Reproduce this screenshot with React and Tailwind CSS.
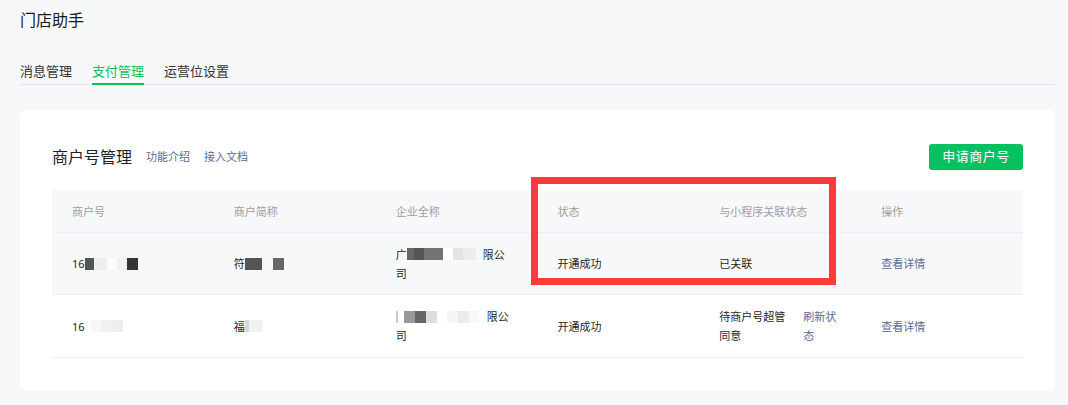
import React from "react";

const font = { fontFamily: '"Noto Sans", "Noto Sans CJK SC", sans-serif' };

// pixelated mosaic used to hide private info
function Mosaic({ blocks }) {
  return (
    <span className="inline-flex items-center h-[12px]">
      {blocks.map(([w, c], i) => (
        <span key={i} className="inline-block h-[12px]" style={{ width: w, background: c }} />
      ))}
    </span>
  );
}

const columns = ["商户号", "商户简称", "企业全称", "状态", "与小程序关联状态", "操作"];

function Cell({ children }) {
  return <div className="pl-[20px] flex items-center">{children}</div>;
}

function Link({ children, className = "" }) {
  return <span className={"text-[#576b95] cursor-pointer " + className}>{children}</span>;
}

export default function App() {
  return (
    <div className="min-h-screen bg-[#f7f8fa] text-[#1f1f1f]" style={font}>
      <div className="ml-[20px] w-[1035px] pt-[8px] pb-[14px]">
        <h1 className="text-[16px] leading-[24px] font-normal text-[#1a1a1a]">门店助手</h1>

        {/* --- TABS --- */}
        <div className="mt-[29px] flex gap-[20px] border-b border-[#e3e5e8] text-[13px] leading-[20px]">
          <div className="-mb-px pb-[2px] border-b-2 border-transparent text-[#333]">消息管理</div>
          <div className="-mb-px pb-[2px] border-b-2 border-[#07c160] text-[#07c160]">支付管理</div>
          <div className="-mb-px pb-[2px] border-b-2 border-transparent text-[#333]">运营位设置</div>
        </div>

        {/* --- CARD --- */}
        <div className="mt-[25px] bg-white rounded-[6px] px-[32px] pt-[34px] pb-[33px]">
          <div className="flex items-center justify-between h-[26px]">
            <div className="flex items-center">
              <span className="text-[16px] leading-[24px]">商户号管理</span>
              <Link className="ml-[14px] text-[11px]">功能介绍</Link>
              <Link className="ml-[14px] text-[11px]">接入文档</Link>
            </div>
            <button className="w-[94px] h-[26px] rounded-[3px] bg-[#07c160] text-white text-[13px] tracking-[0.5px]">
              申请商户号
            </button>
          </div>

          <div className="relative mt-[20px] text-[11px] leading-[19px]">
            {/* header */}
            <div className="grid grid-cols-6 h-[43px] bg-[#f7f8fa] border-b border-[#eceef1] text-[#9e9e9e]">
              {columns.map((c) => (
                <Cell key={c}>{c}</Cell>
              ))}
            </div>

            {/* row 1 */}
            <div className="grid grid-cols-6 h-[62px] bg-[#f7f8fa] border-b border-[#eceef1]">
              <Cell>
                <span>16</span>
                <Mosaic blocks={[[9, "#555"], [13, "#eeeff1"], [10, "#fbfbfc"], [10, "#f0f1f3"], [11, "#353535"]]} />
              </Cell>
              <Cell>
                <span>符</span>
                <Mosaic blocks={[[17, "#555"], [11, "#f5f6f8"], [11, "#666"]]} />
              </Cell>
              <Cell>
                <div>
                  <div className="flex items-center">
                    <span>广</span>
                    <Mosaic blocks={[[7, "#666"], [10, "#555"], [19, "#737373"], [10, "#ffffff"], [10, "#e4e4e6"], [13, "#ececee"], [7, "#f7f8fa"]]} />
                    <span>限公</span>
                  </div>
                  <div>司</div>
                </div>
              </Cell>
              <Cell>开通成功</Cell>
              <Cell>已关联</Cell>
              <Cell>
                <Link>查看详情</Link>
              </Cell>
            </div>

            {/* row 2 */}
            <div className="grid grid-cols-6 h-[63px] border-b border-[#f0f1f3]">
              <Cell>
                <span>16</span>
                <Mosaic blocks={[[6, "#fff"], [10, "#f7f7f8"], [12, "#f1f1f2"], [10, "#eeeeef"]]} />
              </Cell>
              <Cell>
                <span>福</span>
                <Mosaic blocks={[[4, "#d8d8d8"], [14, "#f2f2f3"]]} />
              </Cell>
              <Cell>
                <div>
                  <div className="flex items-center">
                    <Mosaic blocks={[[2, "#ccc"], [6, "#fff"], [11, "#999"], [11, "#666"], [11, "#ddd"], [10, "#fff"], [11, "#f5f5f6"], [11, "#ebebec"], [10, "#f8f8f8"], [8, "#fff"]]} />
                    <span>限公</span>
                  </div>
                  <div>司</div>
                </div>
              </Cell>
              <Cell>开通成功</Cell>
              <Cell>
                <span className="w-[68px]">待商户号超管同意</span>
                <Link className="ml-[16px] w-[34px]">刷新状态</Link>
              </Cell>
              <Cell>
                <Link>查看详情</Link>
              </Cell>
            </div>

            {/* annotation box */}
            <div className="absolute left-[479px] top-[-13px] w-[305px] h-[108px] border-[7px] border-[#fc3a3a] pointer-events-none" />
          </div>
        </div>
      </div>
    </div>
  );
}
